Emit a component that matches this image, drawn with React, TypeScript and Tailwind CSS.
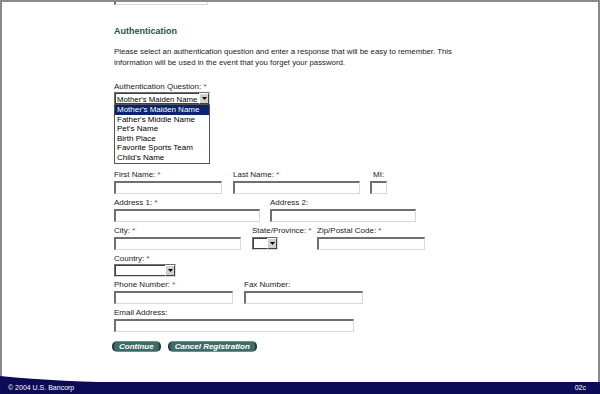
import React from 'react';

const Req = () => <span className="text-[#e0201c]"> *</span>;

const Box = ({ w, className = '' }: { w: number; className?: string }) => (
  <div
    className={`h-[13px] bg-white border border-t-2 border-l-2 border-t-[#6f6f6f] border-l-[#6f6f6f] border-b-[#d8d8d8] border-r-[#d8d8d8] ${className}`}
    style={{ width: w }}
  />
);

const Select = ({ w, text = '' }: { w: number; text?: string }) => (
  <div
    className="h-[13px] bg-white flex items-stretch border border-t-[#6f6f6f] border-l-[#6f6f6f] border-b-[#d8d8d8] border-r-[#d8d8d8]"
    style={{ width: w }}
  >
    <div className="flex-1 text-[7.8px] leading-[11px] pl-[1px] text-black overflow-hidden whitespace-nowrap border border-[#404040] border-r-0">
      {text}
    </div>
    <div className="w-[10px] bg-[#d4d0c8] border border-t-white border-l-white border-b-[#404040] border-r-[#404040] flex items-center justify-center">
      <svg width="5" height="3" viewBox="0 0 5 3">
        <path d="M0 0h5L2.5 3z" fill="#000" />
      </svg>
    </div>
  </div>
);

const Label = ({ children }: { children: React.ReactNode }) => (
  <div className="text-[8px] leading-[10px] text-[#222] whitespace-nowrap">{children}</div>
);

const Btn = ({ children }: { children: React.ReactNode }) => (
  <div className="h-[11px] px-[5px] rounded-[5px] bg-[#3e6b66] border-x-2 border-x-[#1f3d3a] border-y border-y-[#6a918c] text-white italic font-bold text-[8px] leading-[9px] flex items-center">
    {children}
  </div>
);

export default function App() {
  const questions = [
    "Mother's Maiden Name",
    "Father's Middle Name",
    "Pet's Name",
    'Birth Place',
    'Favorite Sports Team',
    "Child's Name",
  ];

  return (
    <div
      className="w-[600px] h-[394px] relative overflow-hidden bg-white flex flex-col"
      style={{ fontFamily: '"Liberation Sans", Arial, sans-serif' }}
    >
      <div className="flex-1 border-t-2 border-x-2 border-[#8a8a8a] pl-[112px] overflow-hidden">
        <Box w={94} className="-mt-[10px]" />

        <h2 className="mt-[21px] text-[9px] leading-[11px] font-bold text-[#1e5446]">Authentication</h2>
        <p className="mt-[9px] text-[7.8px] leading-[11px] text-[#222] w-[360px]">
          Please select an authentication question and enter a response that will be easy to remember. This
          information will be used in the event that you forget your password.
        </p>

        <div className="mt-[14px] relative">
          <Label>
            Authentication Question:<Req />
          </Label>
          <div className="mt-[0px]">
            <Select w={96} text="Mother's Maiden Name" />
          </div>
          {/* open dropdown list */}
          <div className="absolute left-0 top-[22px] w-[96px] bg-white border border-[#555] z-10">
            {questions.map((q, i) => (
              <div
                key={q}
                className={`text-[8px] leading-[9.6px] pl-[2px] whitespace-nowrap ${
                  i === 0 ? 'bg-[#0a246a] text-white' : 'text-black'
                }`}
              >
                {q}
              </div>
            ))}
          </div>
        </div>

        <div className="mt-[65px] flex">
          <div className="w-[119px]">
            <Label>
              First Name:<Req />
            </Label>
            <Box w={108} className="mt-[1px]" />
          </div>
          <div className="w-[137px]">
            <Label>
              Last Name:<Req />
            </Label>
            <Box w={127} className="mt-[1px]" />
          </div>
          <div>
            <div className="pl-[3px]">
              <Label>MI:</Label>
            </div>
            <Box w={17} className="mt-[1px]" />
          </div>
        </div>

        <div className="mt-[4px] flex">
          <div className="w-[156px]">
            <Label>
              Address 1:<Req />
            </Label>
            <Box w={146} className="mt-[1px]" />
          </div>
          <div>
            <Label>Address 2:</Label>
            <Box w={146} className="mt-[1px]" />
          </div>
        </div>

        <div className="mt-[4px] flex">
          <div className="w-[138px]">
            <Label>
              City:<Req />
            </Label>
            <Box w={127} className="mt-[1px]" />
          </div>
          <div className="w-[65px]">
            <Label>
              State/Province:<Req />
            </Label>
            <div className="mt-[1px]">
              <Select w={26} />
            </div>
          </div>
          <div>
            <Label>
              Zip/Postal Code:<Req />
            </Label>
            <Box w={108} className="mt-[1px]" />
          </div>
        </div>

        <div className="mt-[4px]">
          <Label>
            Country:<Req />
          </Label>
          <div className="mt-[0px]">
            <Select w={62} />
          </div>
        </div>

        <div className="mt-[3px] flex">
          <div className="w-[130px]">
            <Label>
              Phone Number:<Req />
            </Label>
            <Box w={119} className="mt-[1px]" />
          </div>
          <div>
            <Label>Fax Number:</Label>
            <Box w={119} className="mt-[1px]" />
          </div>
        </div>

        <div className="mt-[4px]">
          <Label>Email Address:</Label>
          <Box w={240} className="mt-[1px]" />
        </div>

        <div className="mt-[9px] -ml-[2px] flex gap-[7px]">
          <Btn>Continue</Btn>
          <Btn>Cancel Registration</Btn>
        </div>
      </div>

      <div className="h-[12px] bg-[#0d0b55] flex items-center justify-between px-[8px] text-white text-[7px] leading-[8px]">
        <span>© 2004 U.S. Bancorp</span>
        <span className="pr-[6px]">02c</span>
      </div>

      <svg className="absolute left-0 bottom-[11px]" width="130" height="7" viewBox="0 0 130 7">
        <path d="M0 0 C40 4 90 6 130 7 L0 7Z" fill="#0d0b55" />
      </svg>
    </div>
  );
}
